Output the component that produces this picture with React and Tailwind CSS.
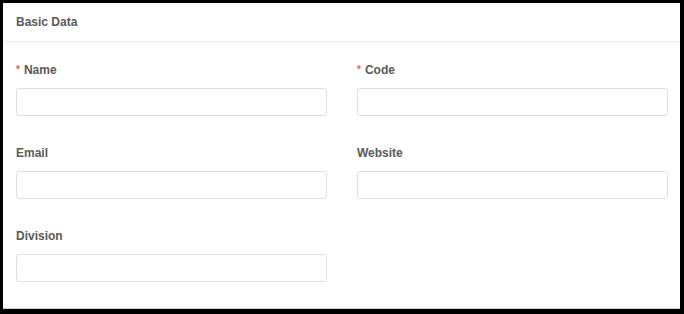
const Field = ({ label, required }) => (
  <div className="flex flex-col">
    <label className="h-4 text-[12px] leading-4 font-semibold text-[#5a5a5a]">
      {required && <span className="text-[10px] text-[#ec5b5b] mr-1 align-[1px]">*</span>}
      {label}
    </label>
    <input
      type="text"
      className="mt-[10px] h-[28px] w-full rounded-[3px] border border-[#dedede] bg-white outline-none"
    />
  </div>
);

export default function App() {
  return (
    <div className="w-[684px] h-[314px] bg-black pt-[3px] pl-[3px] pr-[4px] pb-[5px] font-['Liberation_Sans',Inter,sans-serif]">
      <div className="h-full bg-white border-b border-[#cfcfcf]">
        <div className="h-[39px] flex items-center px-[13px] border-b border-[#ececec]">
          <span className="text-[12px] font-semibold text-[#5a5a5a]">Basic Data</span>
        </div>
        <div className="grid grid-cols-2 gap-x-[30px] gap-y-[29px] pt-[20px] pl-[13px] pr-[12px]">
          <Field label="Name" required />
          <Field label="Code" required />
          <Field label="Email" />
          <Field label="Website" />
          <Field label="Division" />
        </div>
      </div>
    </div>
  );
}
